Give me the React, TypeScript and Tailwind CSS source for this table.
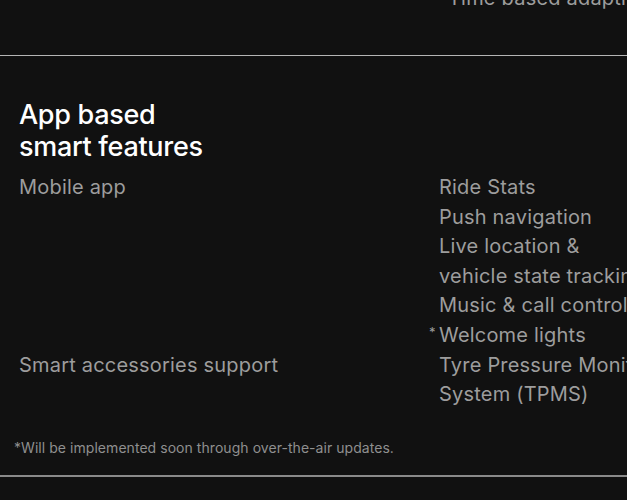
import React from 'react';

const appFeatures: { text: React.ReactNode; soon?: boolean }[] = [
  { text: 'Ride Stats' },
  { text: 'Push navigation' },
  { text: <>Live location &amp;<br />vehicle state tracking</> },
  { text: 'Music & call control' },
  { text: 'Welcome lights', soon: true },
];

export default function App() {
  return (
    <div className="min-h-[500px] w-[627px] overflow-hidden bg-[#111111] font-['Inter',sans-serif] text-[#9d9d9d]">
      {/* tail of the previous section */}
      <div className="h-[56px] overflow-hidden border-b border-[#b5b5b5] pl-[448px]">
        <p className="-mt-[17px] whitespace-nowrap text-[20px] leading-[30px] tracking-[0.2px]">Time based adaptive brightness</p>
      </div>

      <section className="border-b-2 border-[#8a8a8a] px-[19px] pt-[43px] pb-[17px]">
        <h2 className="text-[27px] font-medium leading-[32px] tracking-[-0.3px] text-white">
          App based
          <br />
          smart features
        </h2>

        <div className="mt-[10px] grid grid-cols-[420px_1fr] text-[20px] leading-[29.6px] tracking-[0.2px]">
          <div>Mobile app</div>
          <ul className="whitespace-nowrap">
            {appFeatures.map((f, i) => (
              <li key={i} className="relative">
                {f.soon && <span className="absolute -left-[10px] top-[-3px] text-[13px]">*</span>}
                {f.text}
              </li>
            ))}
          </ul>

          <div>Smart accessories support</div>
          <div className="whitespace-nowrap">
            Tyre Pressure Monitoring
            <br />
            System (TPMS)
          </div>
        </div>

        <p className="-ml-[5px] mt-[28px] text-[14px] leading-[20px] tracking-[0.05px] text-[#8f8f8f]">
          *Will be implemented soon through over-the-air updates.
        </p>
      </section>
    </div>
  );
}
